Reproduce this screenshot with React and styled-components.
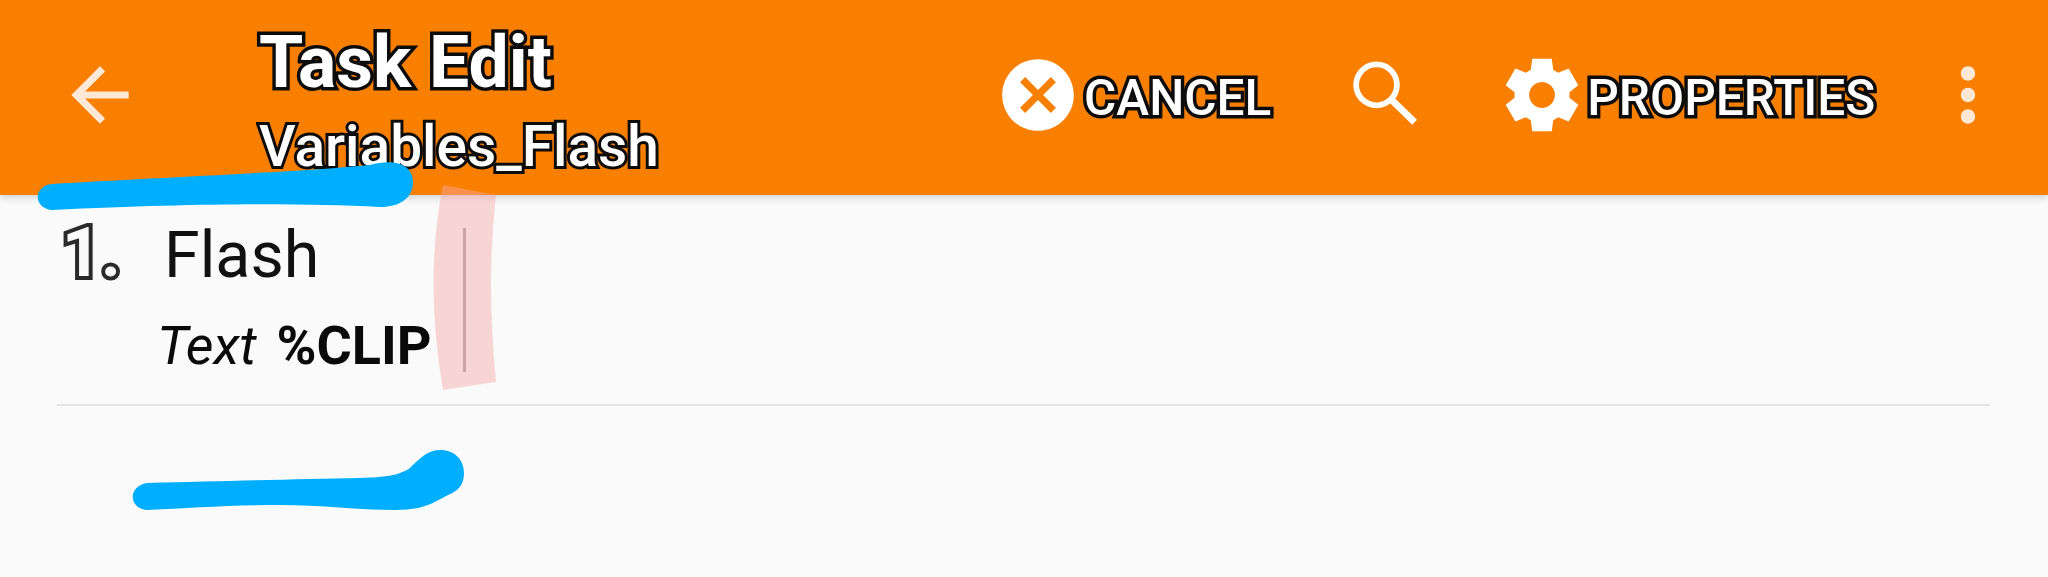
import React from "react";
import styled, { createGlobalStyle } from "styled-components";
import { MdArrowBack, MdCancel, MdMoreVert } from "react-icons/md";

const Global = createGlobalStyle`
  html, body {
    margin: 0;
    padding: 0;
    background: #fafafa;
    font-family: Roboto, "Liberation Sans", sans-serif;
  }
`;

const Page = styled.div`
  position: relative;
  height: 577px;
  overflow: hidden;
  background: #fafafa;
`;

const Toolbar = styled.header`
  display: flex;
  align-items: center;
  box-sizing: border-box;
  height: 195px;
  padding: 0 0 5px 57px;
  background: #f97f00;
  box-shadow: 0 2px 8px rgba(0, 0, 0, 0.18);
  color: #fff;
`;

const IconSlot = styled.span`
  display: flex;
  flex: none;
  width: 86px;
  height: 86px;
  color: ${(p) => p.$color || "#fff"};
  margin-left: ${(p) => p.$ml || 0}px;
`;

const Titles = styled.div`
  display: flex;
  flex-direction: column;
  margin-left: 116px;
  padding-top: 10px;
  width: 736px;
`;

const outlined = `
  color: #fff;
  -webkit-text-stroke: 7px #0c0c0c;
  paint-order: stroke fill;
  filter: blur(0.6px);
`;

const Title = styled.div`
  ${outlined}
  font-size: 71.5px;
  font-weight: 700;
  line-height: 84px;
`;

const Subtitle = styled.div`
  ${outlined}
  -webkit-text-stroke-width: 6px;
  font-size: 56.8px;
  font-weight: 500;
  line-height: 66px;
  margin-top: 9px;
`;

const ActionLabel = styled.span`
  ${outlined}
  font-size: 49.5px;
  font-weight: 500;
  line-height: 56px;
  padding-top: 5px;
  margin-left: ${(p) => p.$ml || 0}px;
`;

const Row = styled.div`
  display: flex;
  margin: 0 58px 0 57px;
  height: 209px;
  border-bottom: 2px solid #e4e4e4;
`;

const Number = styled.div`
  flex: none;
  width: 104px;
  margin: 20px 0 0 5px;
  font-size: 68px;
  font-weight: 700;
  line-height: 76px;
  color: #fafafa;
  -webkit-text-stroke: 8px #2a2a2a;
  paint-order: stroke fill;
  filter: blur(0.5px);
`;

const ActionBody = styled.div`
  display: flex;
  flex-direction: column;
  align-items: flex-start;
`;

const Name = styled.div`
  margin: 24px 0 0 -2px;
  font-size: 64.5px;
  line-height: 72px;
  color: #111;
  filter: blur(0.5px);
`;

const Params = styled.div`
  display: flex;
  gap: 20px;
  margin: 25px 0 0 -9px;
  line-height: 60px;
  font-size: 54px;
  color: #0a0a0a;
  filter: blur(0.4px);
`;

const ParamLabel = styled.span`
  font-style: italic;
`;

const ParamValue = styled.span`
  font-weight: 700;
`;

const Handle = styled.div`
  flex: none;
  width: 3px;
  height: 144px;
  margin: 33px 0 0 31px;
  background: #a9a3a3;
`;

const Scribbles = styled.svg`
  position: absolute;
  left: 0;
  top: 0;
  width: 2048px;
  height: 577px;
  pointer-events: none;
`;

const SearchIcon = () => (
  <svg width="86" height="86" viewBox="0 0 24 24" fill="none" stroke="currentColor">
    <circle cx="9.36" cy="9.17" r="5.7" strokeWidth="1.6" />
    <path d="M13.6 13.4 L20 19.6" strokeWidth="1.9" />
  </svg>
);

// six square teeth, in the 24 unit box of the other icons
const gearOutline = () => {
  const at = (deg, r) => {
    const a = (deg * Math.PI) / 180;
    return `${(12 + r * Math.cos(a)).toFixed(2)} ${(12 + r * Math.sin(a)).toFixed(2)}`;
  };
  const points = [];
  for (let k = 0; k < 6; k++) {
    const a = -90 + 60 * k;
    points.push(at(a - 15, 10.5), at(a + 15, 10.5), at(a + 24, 7.7), at(a + 36, 7.7));
  }
  return `M${points.join(" L")} Z`;
};

const GearIcon = () => (
  <svg width="86" height="86" viewBox="0 0 24 24" fill="currentColor">
    <path
      fillRule="evenodd"
      d={`${gearOutline()} M12 8.4 a3.6 3.6 0 1 0 0.01 0 Z`}
    />
  </svg>
);

export default function App() {
  return (
    <Page>
      <Global />
      <Toolbar>
        <IconSlot $color="#ffe9d6"><MdArrowBack size={86} /></IconSlot>
        <Titles>
          <Title>Task Edit</Title>
          <Subtitle>Variables_Flash</Subtitle>
        </Titles>
        <IconSlot><MdCancel size={86} /></IconSlot>
        <ActionLabel $ml={3}>CANCEL</ActionLabel>
        <IconSlot $ml={72}><SearchIcon /></IconSlot>
        <IconSlot $ml={70}><GearIcon /></IconSlot>
        <ActionLabel $ml={2}>PROPERTIES</ActionLabel>
        <IconSlot $ml={50} $color="#ffe9d6"><MdMoreVert size={86} /></IconSlot>
      </Toolbar>
      <Row>
        <Number>1.</Number>
        <ActionBody>
          <Name>Flash</Name>
          <Params>
            <ParamLabel>Text</ParamLabel>
            <ParamValue>%CLIP</ParamValue>
          </Params>
        </ActionBody>
        <Handle />
      </Row>
      <Scribbles viewBox="0 0 2048 577">
        <path
          d="M443 185 L496 195 Q486 280 496 382 L443 390 Q424 280 443 185 Z"
          fill="#f4a8a8"
          fillOpacity="0.45"
        />
        <path
          d="M52 184 C150 178 300 172 370 165 C395 158 413 165 413 182 C413 198 400 207 380 207 C300 203 200 203 52 210 C33 208 33 186 52 184 Z"
          fill="#00aeff"
        />
        <path
          d="M147 483 C230 481 300 479 360 478 C385 477 398 476 410 468 C420 458 428 450 440 450 C455 450 464 460 464 473 C464 485 458 491 448 495 C430 505 420 510 395 510 C360 510 320 505 280 505 C230 505 190 508 147 510 C128 508 128 486 147 483 Z"
          fill="#00aeff"
        />
      </Scribbles>
    </Page>
  );
}
